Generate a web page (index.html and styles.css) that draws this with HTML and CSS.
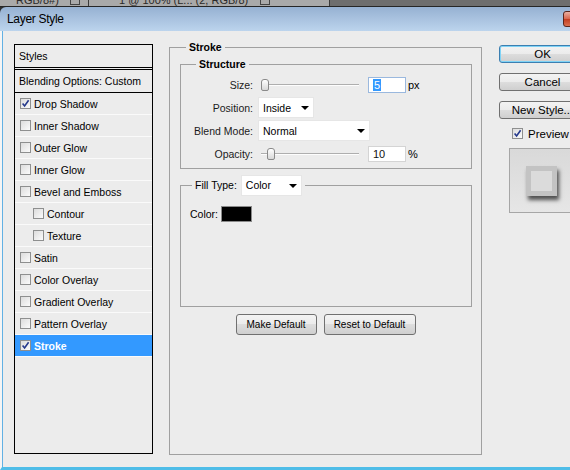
FILE: index.html
```html
<!DOCTYPE html>
<html lang="en">
<head>
  <meta charset="UTF-8" />
  <title>Layer Style</title>
  <link rel="stylesheet" href="styles.css">
</head>
<body>
  <div class="doc-tabs">
    <span class="doc-tab first">RGB/8#) * <i class="tab-x"></i></span>
    <span class="doc-tab second">1 @ 100% (L... (2, RGB/8) * <i class="tab-x"></i></span>
  </div>
  <div class="window">
    <div class="titlebar">
      <span class="title">Layer Style</span>
      <span class="close"></span>
    </div>
    <div class="content">
      <div class="style-list">
        <div class="list-head">Styles</div>
        <div class="list-blend">Blending Options: Custom</div>
        <div class="list-item"><span class="check on"><svg viewBox="0 0 9 9"><path d="M1.6 4.4 L3.6 7 L7.6 1.2" /></svg></span>Drop Shadow</div>
        <div class="list-item"><span class="check"></span>Inner Shadow</div>
        <div class="list-item"><span class="check"></span>Outer Glow</div>
        <div class="list-item"><span class="check"></span>Inner Glow</div>
        <div class="list-item"><span class="check"></span>Bevel and Emboss</div>
        <div class="list-item sub"><span class="check"></span>Contour</div>
        <div class="list-item sub"><span class="check"></span>Texture</div>
        <div class="list-item"><span class="check"></span>Satin</div>
        <div class="list-item"><span class="check"></span>Color Overlay</div>
        <div class="list-item"><span class="check"></span>Gradient Overlay</div>
        <div class="list-item"><span class="check"></span>Pattern Overlay</div>
        <div class="list-item selected"><span class="check on"><svg viewBox="0 0 9 9"><path d="M1.6 4.4 L3.6 7 L7.6 1.2" /></svg></span>Stroke</div>
      </div>

      <fieldset class="group stroke-group">
        <legend>Stroke</legend>
        <fieldset class="group structure">
          <legend>Structure</legend>
          <div class="field">
            <label>Size:</label>
            <div class="slider"><span class="thumb"></span></div>
            <div class="num-input focus"><span class="sel">5</span></div>
            <span class="unit">px</span>
          </div>
          <div class="field">
            <label>Position:</label>
            <div class="dropdown pos">Inside<span class="arrow"></span></div>
          </div>
          <div class="field">
            <label>Blend Mode:</label>
            <div class="dropdown blend">Normal<span class="arrow"></span></div>
          </div>
          <div class="field">
            <label>Opacity:</label>
            <div class="slider"><span class="thumb op"></span></div>
            <div class="num-input">10</div>
            <span class="unit">%</span>
          </div>
        </fieldset>

        <fieldset class="group fill">
          <legend><span>Fill Type:</span><div class="dropdown fill-type">Color<span class="arrow"></span></div></legend>
          <div class="fill-body"><span>Color:</span><span class="swatch"></span></div>
        </fieldset>

        <div class="defaults">
          <button class="btn make">Make Default</button>
          <button class="btn reset">Reset to Default</button>
        </div>
      </fieldset>

      <div class="actions">
        <button class="btn big default">OK</button>
        <button class="btn big">Cancel</button>
        <button class="btn big">New Style...</button>
        <div class="preview-check"><span class="check on"><svg viewBox="0 0 9 9"><path d="M1.6 4.4 L3.6 7 L7.6 1.2" /></svg></span>Preview</div>
        <div class="preview"><div class="preview-square"></div></div>
      </div>
    </div>
  </div>
</body>
</html>
```

FILE: styles.css
```css
html, body {
  margin: 0;
  height: 100%;
  overflow: hidden;
}
body {
  background: #2f2f2f;
  font-family: 'Liberation Sans', Arial, sans-serif;
  font-size: 10.5px;
  color: #000;
}

/* document tabs peeking above the dialog */
.doc-tabs {
  height: 6px;
  display: flex;
  align-items: flex-end;
  overflow: hidden;
  white-space: nowrap;
  background: #6e6e6e;
  border-bottom: 1px solid #262626;
}
.doc-tab {
  height: 12px;
  line-height: 12px;
  font-size: 11px;
  color: #2a2a2a;
  background: #a9a9a9;
  border-right: 1px solid #3a3a3a;
  display: flex;
  align-items: center;
  flex-shrink: 0;
}
.doc-tab.first { width: 72px; padding-left: 16px; }
.doc-tab.second { width: 210px; padding-left: 30px; }
.tab-x {
  width: 8px;
  height: 8px;
  border: 1px solid #444;
  margin-left: 4px;
}

.window {
  width: 640px;
}
.titlebar {
  height: 24px;
  display: flex;
  align-items: center;
  justify-content: space-between;
  padding-left: 7px;
  background: linear-gradient(#96b1d2, #bcd4ed);
  border-top-left-radius: 6px;
}
.title {
  font-size: 12px;
  letter-spacing: -0.3px;
  color: #000;
}
.close {
  width: 43px;
  height: 14px;
  margin-right: 32px;
  border: 1px solid #5b261c;
  border-radius: 3px;
  background: linear-gradient(#eab0a2, #d8634a 50%, #c23b1f 50%, #d9704f);
}

.content {
  height: 439px;
  box-sizing: border-box;
  display: flex;
  align-items: flex-start;
  padding: 13px 0 0 12px;
  background: #ececec;
  border-left: 2px solid #f5f5f5;
  border-bottom: 3px solid #4fbde8;
  box-shadow: inset 1px 0 #62b1e4;
}

/* styles list */
.style-list {
  width: 137px;
  height: 408px;
  border: 1px solid #000;
  flex-shrink: 0;
}
.list-head, .list-blend {
  height: 22px;
  line-height: 22px;
  padding-left: 4px;
}
.list-head { border-bottom: 3px double #000; }
.list-blend { border-bottom: 1px solid #000; }
.list-item {
  height: 21px;
  display: flex;
  align-items: center;
  padding-left: 5px;
  border-bottom: 1px solid #fafafa;
}
.list-item.sub { padding-left: 18px; }
.list-item.selected {
  background: #3399ff;
  color: #fff;
  font-weight: bold;
}
.check {
  width: 9px;
  height: 9px;
  border: 1px solid #8e8f8f;
  background: linear-gradient(135deg, #dcdcdc, #fbfbfb);
  margin-right: 3px;
  display: flex;
  flex-shrink: 0;
}
.check svg { width: 9px; height: 9px; }
.check path {
  fill: none;
  stroke: #25398c;
  stroke-width: 1.6;
}

/* group boxes */
.group {
  margin: 0;
  padding: 0;
  min-width: 0;
  border: 1px solid #a0a0a0;
}
.group > legend {
  padding: 0 3px;
  line-height: 12px;
  font-weight: bold;
}
.stroke-group {
  width: 311px;
  margin: -3px 0 0 16px;
  flex-shrink: 0;
}
.stroke-group > legend { margin-left: 16px; }

.structure {
  width: 290px;
  margin: 5px 0 0 10px;
  padding: 3px 0 3px;
}
.structure > legend { margin-left: 15px; }
.field {
  height: 23px;
  display: flex;
  align-items: center;
}
.field label {
  width: 72px;
  text-align: right;
  color: #1b1b1b;
}
.slider {
  width: 98px;
  height: 12px;
  margin-left: 8px;
  display: flex;
  align-items: center;
  background: linear-gradient(transparent 5px, #aeaeae 5px, #aeaeae 6px, #fdfdfd 6px, #fdfdfd 7px, transparent 7px);
}
.thumb {
  width: 6px;
  height: 10px;
  border: 1px solid #8a8a8a;
  border-radius: 3px 3px 2px 2px;
  background: linear-gradient(#ffffff, #d8d8d8);
}
.thumb.op { margin-left: 6px; }
.num-input {
  width: 32px;
  height: 14px;
  line-height: 14px;
  margin-left: 9px;
  padding-left: 4px;
  background: #fff;
  border: 1px solid #d4d4d4;
  color: #111;
  font-size: 11px;
}
.num-input.focus { border-color: #9ab8de; }
.sel {
  background: #3399ff;
  color: #fff;
  padding: 0 1px;
}
.unit {
  margin-left: 2px;
  font-size: 11px;
}
.dropdown {
  height: 21px;
  display: flex;
  align-items: center;
  justify-content: space-between;
  box-sizing: border-box;
  padding: 0 4px;
  margin-left: 5px;
  background: #fff;
  border: 1px solid #e6e6e6;
  font-weight: normal;
  color: #000;
}
.dropdown.pos { width: 56px; }
.dropdown.blend { width: 112px; }
.arrow {
  width: 0;
  height: 0;
  border-left: 4px solid transparent;
  border-right: 4px solid transparent;
  border-top: 4px solid #000;
}

.fill {
  width: 290px;
  margin: 6px 0 0 10px;
}
.fill > legend {
  display: flex;
  align-items: center;
  margin-left: 11px;
  font-weight: normal;
  line-height: 21px;
}
.dropdown.fill-type {
  width: 61px;
  margin-left: 4px;
}
.fill-body {
  height: 110px;
  box-sizing: border-box;
  padding: 10px 0 0 9px;
  display: flex;
  align-items: flex-start;
  line-height: 16px;
}
.swatch {
  width: 29px;
  height: 14px;
  margin-left: 3px;
  background: #000;
  border: 1px solid #8a8a8a;
}

.defaults {
  display: flex;
  justify-content: center;
  gap: 7px;
  margin-top: 7px;
  padding-bottom: 119px;
}
.btn {
  height: 21px;
  padding: 0;
  border: 1px solid #707070;
  border-radius: 3px;
  background: linear-gradient(#f3f3f3, #ebebeb 50%, #dddddd 50%, #cfcfcf);
  font-family: 'Liberation Sans', Arial, sans-serif;
  font-size: 10px;
  color: #000;
}
.btn.make { width: 81px; }
.btn.reset { width: 92px; }

/* right column */
.actions {
  width: 87px;
  margin-left: 17px;
  display: flex;
  flex-direction: column;
  flex-shrink: 0;
}
.btn.big {
  height: 18px;
  font-size: 11.5px;
  margin-top: 10px;
}
.btn.big.default {
  margin-top: 1px;
  border-color: #3c7fb1;
  box-shadow: inset 0 0 0 1px #7fd3f6;
}
.preview-check {
  display: flex;
  align-items: center;
  height: 13px;
  margin-top: 8px;
  padding-left: 13px;
  font-size: 11.5px;
}
.preview-check .check { margin-right: 5px; }
.preview {
  width: 64px;
  height: 63px;
  margin: 8px 0 0 10px;
  border: 1px solid #a6a6a6;
  background: linear-gradient(#d9d9d9, #e6e6e6);
  padding: 17px 0 0 16px;
  box-sizing: border-box;
  height: 65px;
}
.preview-square {
  width: 21px;
  height: 20px;
  border: 5px solid #c3c3c3;
  background: #dbdbdb;
  box-shadow: 2px 4px 4px rgba(0, 0, 0, 0.65);
}
```
